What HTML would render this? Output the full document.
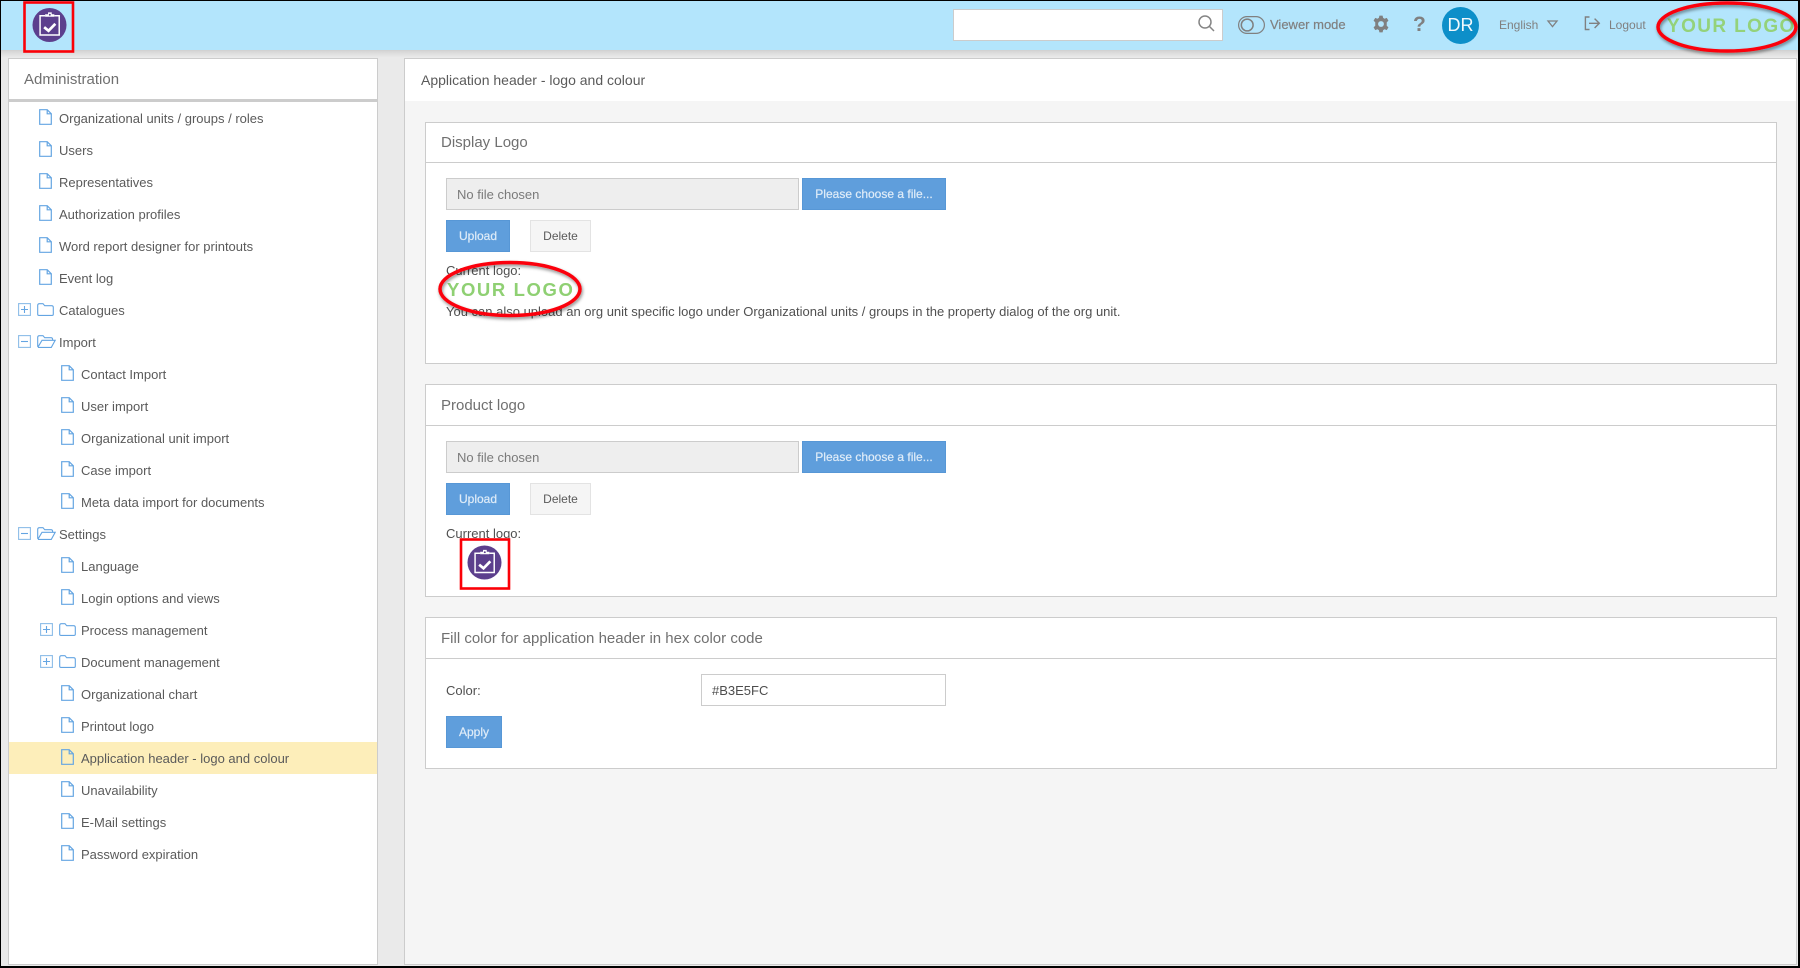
<!DOCTYPE html>
<html><head><meta charset="utf-8"><title>Application header - logo and colour</title>
<style>
html,body{margin:0;padding:0}
body{width:1800px;height:968px;overflow:hidden;position:relative;background:#eaeaea;font-family:"Liberation Sans",Arial,sans-serif;font-size:13px;color:#555}
div,span{position:absolute;box-sizing:border-box;white-space:nowrap}
.hdr{left:0;top:0;width:1800px;height:50px;background:#b3e5fc}
.shadow{left:0;top:50px;width:1800px;height:8px;background:linear-gradient(#cfcfcf,#d9d9d9 25%,#ececec)}
.side{left:8px;top:58px;width:370px;height:907px;background:#fff;border:1px solid #ccc}
.sidetitle{left:24px;top:58px;height:41px;line-height:44px;font-size:15px;color:#707070}
.sideline{left:9px;top:99px;width:368px;height:3px;background:#ccc}
.r{height:32px;line-height:34px;color:#5a5a5a}
.hl{left:9px;top:742px;width:368px;height:32px;background:#fdeeba}
.main{left:404px;top:58px;width:1393px;height:907px;background:#f5f5f5;border:1px solid #ccc}
.maintop{left:405px;top:59px;width:1391px;height:42px;background:#fff}
.maintitle{left:421px;top:59px;line-height:42px;font-size:14px;color:#5a5a5a}
.card{left:425px;width:1352px;background:#fff;border:1px solid #ccc}
.line{left:426px;width:1350px;height:1px;background:#ccc}
.ct{left:441px;font-size:15px;color:#707070;line-height:20px}
.inp{left:446px;width:353px;height:32px;background:#eee;border:1px solid #ccc;line-height:31px;padding-left:10px;color:#7a7a7a;font-size:13px}
.btn{background:#5f9edc;border:1px solid #5797d6;color:#dfecf8;font-size:12px;font-weight:400;text-align:center;line-height:30px;-webkit-text-stroke:.2px #dfecf8}
.del{left:530px;width:61px;height:32px;background:#f5f5f5;border:1px solid #e3e3e3;color:#5a5a5a;font-size:12px;text-align:center;line-height:30px}
.t{color:#505050;line-height:18px}
.logo{font-weight:bold;color:#8fd073;letter-spacing:1.6px}
.gr{color:#808080}
svg{position:absolute;overflow:visible}
</style></head><body>
<svg width="0" height="0" style="position:absolute"><defs>
<symbol id="doc" viewBox="0 0 13 16" overflow="visible"><path d="M.7.7H8.2L12.3 4.8V15.3H.7Z M8.2.7V4.8H12.3" fill="none" stroke="#64a5e2" stroke-width="1.2"/></symbol>
<symbol id="fc" viewBox="0 0 17 13" overflow="visible"><path d="M.7 11.2V2.4Q.7.7 2.4.7H6L7.7 2.7H14.6Q16.3 2.7 16.3 4.4V11.2Q16.3 12.4 15 12.4H2Q.7 12.4.7 11.2Z" fill="none" stroke="#64a5e2" stroke-width="1.1"/></symbol>
<symbol id="fo" viewBox="0 0 19 13" overflow="visible"><path d="M.7 11.8V2.4Q.7.7 2.4.7H6L7.7 2.7H14Q15.6 2.7 15.6 4.4V5.3H5L.9 12.2 M.9 12.4H14.3L18.2 5.3H15.6" fill="none" stroke="#64a5e2" stroke-width="1.1"/></symbol>
<symbol id="plus" viewBox="0 0 13 13" overflow="visible"><rect x=".6" y=".6" width="11.8" height="11.8" fill="none" stroke="#8dbde8" stroke-width="1.1"/><path d="M3 6.5H10M6.5 3V10" stroke="#64a5e2" stroke-width="1.1"/></symbol>
<symbol id="minus" viewBox="0 0 13 13" overflow="visible"><rect x=".6" y=".6" width="11.8" height="11.8" fill="none" stroke="#8dbde8" stroke-width="1.1"/><path d="M3 6.5H10" stroke="#64a5e2" stroke-width="1.1"/></symbol>
<symbol id="clip" viewBox="0 0 36 36" overflow="visible"><circle cx="18" cy="18" r="17.5" fill="#5c3f8d"/><path d="M13.5 8.5H8.3V28.3H28V8.5H23" fill="none" stroke="#fff" stroke-width="1.5"/><path d="M13.5 9.5H23V7H20.3V5H16.5V7H13.5Z" fill="#fff"/><circle cx="18.3" cy="7.4" r="1" fill="#5c3f8d"/><path d="M12.5 20.3L17 24L24 16.8" fill="none" stroke="#fff" stroke-width="2.8"/></symbol>
</defs></svg>

<div class="hdr"></div><div class="shadow"></div>

<div class="side"></div>
<div class="sidetitle">Administration</div>
<div class="sideline"></div>
<div class="hl"></div>

<svg style="left:39px;top:109px" width="13" height="16"><use href="#doc"/></svg><div class="r" style="left:59px;top:102px">Organizational units / groups / roles</div>
<svg style="left:39px;top:141px" width="13" height="16"><use href="#doc"/></svg><div class="r" style="left:59px;top:134px">Users</div>
<svg style="left:39px;top:173px" width="13" height="16"><use href="#doc"/></svg><div class="r" style="left:59px;top:166px">Representatives</div>
<svg style="left:39px;top:205px" width="13" height="16"><use href="#doc"/></svg><div class="r" style="left:59px;top:198px">Authorization profiles</div>
<svg style="left:39px;top:237px" width="13" height="16"><use href="#doc"/></svg><div class="r" style="left:59px;top:230px">Word report designer for printouts</div>
<svg style="left:39px;top:269px" width="13" height="16"><use href="#doc"/></svg><div class="r" style="left:59px;top:262px">Event log</div>
<svg style="left:18px;top:303px" width="13" height="13"><use href="#plus"/></svg><svg style="left:37px;top:303px" width="17" height="13"><use href="#fc"/></svg><div class="r" style="left:59px;top:294px">Catalogues</div>
<svg style="left:18px;top:335px" width="13" height="13"><use href="#minus"/></svg><svg style="left:37px;top:335px" width="19" height="13"><use href="#fo"/></svg><div class="r" style="left:59px;top:326px">Import</div>
<svg style="left:61px;top:365px" width="13" height="16"><use href="#doc"/></svg><div class="r" style="left:81px;top:358px">Contact Import</div>
<svg style="left:61px;top:397px" width="13" height="16"><use href="#doc"/></svg><div class="r" style="left:81px;top:390px">User import</div>
<svg style="left:61px;top:429px" width="13" height="16"><use href="#doc"/></svg><div class="r" style="left:81px;top:422px">Organizational unit import</div>
<svg style="left:61px;top:461px" width="13" height="16"><use href="#doc"/></svg><div class="r" style="left:81px;top:454px">Case import</div>
<svg style="left:61px;top:493px" width="13" height="16"><use href="#doc"/></svg><div class="r" style="left:81px;top:486px">Meta data import for documents</div>
<svg style="left:18px;top:527px" width="13" height="13"><use href="#minus"/></svg><svg style="left:37px;top:527px" width="19" height="13"><use href="#fo"/></svg><div class="r" style="left:59px;top:518px">Settings</div>
<svg style="left:61px;top:557px" width="13" height="16"><use href="#doc"/></svg><div class="r" style="left:81px;top:550px">Language</div>
<svg style="left:61px;top:589px" width="13" height="16"><use href="#doc"/></svg><div class="r" style="left:81px;top:582px">Login options and views</div>
<svg style="left:40px;top:623px" width="13" height="13"><use href="#plus"/></svg><svg style="left:59px;top:623px" width="17" height="13"><use href="#fc"/></svg><div class="r" style="left:81px;top:614px">Process management</div>
<svg style="left:40px;top:655px" width="13" height="13"><use href="#plus"/></svg><svg style="left:59px;top:655px" width="17" height="13"><use href="#fc"/></svg><div class="r" style="left:81px;top:646px">Document management</div>
<svg style="left:61px;top:685px" width="13" height="16"><use href="#doc"/></svg><div class="r" style="left:81px;top:678px">Organizational chart</div>
<svg style="left:61px;top:717px" width="13" height="16"><use href="#doc"/></svg><div class="r" style="left:81px;top:710px">Printout logo</div>
<svg style="left:61px;top:749px" width="13" height="16"><use href="#doc"/></svg><div class="r" style="left:81px;top:742px">Application header - logo and colour</div>
<svg style="left:61px;top:781px" width="13" height="16"><use href="#doc"/></svg><div class="r" style="left:81px;top:774px">Unavailability</div>
<svg style="left:61px;top:813px" width="13" height="16"><use href="#doc"/></svg><div class="r" style="left:81px;top:806px">E-Mail settings</div>
<svg style="left:61px;top:845px" width="13" height="16"><use href="#doc"/></svg><div class="r" style="left:81px;top:838px">Password expiration</div>

<div class="main"></div><div class="maintop"></div>
<div class="maintitle">Application header - logo and colour</div>

<div class="card" style="top:122px;height:242px"></div><div class="line" style="top:162px"></div>
<div class="ct" style="top:133px">Display Logo</div>
<div class="inp" style="top:178px">No file chosen</div>
<div class="btn" style="left:802px;top:178px;width:144px;height:32px">Please choose a file...</div>
<div class="btn" style="left:446px;top:220px;width:64px;height:32px">Upload</div>
<div class="del" style="top:220px">Delete</div>
<div class="t" style="left:446px;top:262px">Current logo:</div>
<div class="logo" style="left:447px;top:276px;font-size:18.5px;line-height:28px">YOUR LOGO</div>
<div class="t" style="left:446px;top:303px">You can also upload an org unit specific logo under Organizational units / groups in the property dialog of the org unit.</div>

<div class="card" style="top:384px;height:213px"></div><div class="line" style="top:425px"></div>
<div class="ct" style="top:396px">Product logo</div>
<div class="inp" style="top:441px">No file chosen</div>
<div class="btn" style="left:802px;top:441px;width:144px;height:32px">Please choose a file...</div>
<div class="btn" style="left:446px;top:483px;width:64px;height:32px">Upload</div>
<div class="del" style="top:483px">Delete</div>
<div class="t" style="left:446px;top:525px">Current logo:</div>
<svg style="left:467px;top:545px" width="35" height="35" viewBox="0 0 36 36"><use href="#clip" width="36" height="36"/></svg>

<div class="card" style="top:617px;height:152px"></div><div class="line" style="top:658px"></div>
<div class="ct" style="top:629px">Fill color for application header in hex color code</div>
<div class="t" style="left:446px;top:682px">Color:</div>
<div style="left:701px;top:674px;width:245px;height:32px;background:#fff;border:1px solid #ccc;line-height:31px;padding-left:10px;color:#4d4d4d">#B3E5FC</div>
<div class="btn" style="left:446px;top:716px;width:56px;height:32px">Apply</div>

<!-- header content -->
<svg style="left:32px;top:7px" width="35" height="36" viewBox="0 0 36 36"><use href="#clip" width="36" height="36"/></svg>
<div style="left:953px;top:9px;width:270px;height:32px;background:#fff;border:1px solid #ccc"></div>
<svg style="left:1197px;top:14px" width="20" height="20" fill="none" stroke="#858585" stroke-width="1.5"><circle cx="8" cy="8" r="6"/><path d="M12.4 12.4L17 17"/></svg>
<svg style="left:1238px;top:16px" width="27" height="18" fill="none" stroke="#808080" stroke-width="1.2"><rect x=".6" y=".6" width="25.8" height="16.8" rx="8.4"/><circle cx="9.2" cy="9" r="5.9" stroke-width="1.5"/></svg>
<div class="gr" style="left:1270px;top:16px;line-height:18px;font-size:13px;-webkit-text-stroke:.2px #808080">Viewer mode</div>
<svg style="left:1372px;top:15px" width="18" height="18" viewBox="0 0 16 16"><path fill="#808080" fill-rule="evenodd" d="M6.6.6H9.4L9.9 2.6 11.2 3.3 13.1 2.6 14.6 5 13.1 6.5V8 9.5L14.6 11 13.1 13.4 11.2 12.7 9.9 13.4 9.4 15.4H6.6L6.1 13.4 4.8 12.7 2.9 13.4 1.4 11 2.9 9.5V6.5L1.4 5 2.9 2.6 4.8 3.3 6.1 2.6ZM8 5.4A2.6 2.6 0 1 0 8 10.6 2.6 2.6 0 1 0 8 5.4Z"/></svg>
<div style="left:1413px;top:13px;line-height:24px;font-size:21px;font-weight:bold;color:#808080">?</div>
<div style="left:1442px;top:7px;width:37px;height:37px;border-radius:50%;background:#0d8fc9;color:#f2f9fd;font-size:18px;text-align:center;line-height:37px">DR</div>
<div class="gr" style="left:1499px;top:16px;line-height:18px;font-size:12px">English</div>
<svg style="left:1547px;top:20px" width="11" height="8" fill="none" stroke="#808080" stroke-width="1.3"><path d="M1 1H10L5.5 6.6Z"/></svg>
<svg style="left:1584px;top:16px" width="17" height="15" fill="none" stroke="#808080" stroke-width="1.4"><path d="M5.5 1H1.4V13.5H5.5M5 7.3H15M10.6 2.6L15.3 7.3 10.6 12"/></svg>
<div class="gr" style="left:1609px;top:16px;line-height:18px;font-size:12px">Logout</div>
<div class="logo" style="left:1667px;top:12px;font-size:19px;line-height:30px;letter-spacing:1.4px;color:#94d27a">YOUR LOGO</div>

<!-- annotations -->
<svg style="left:0;top:0;pointer-events:none" width="1800" height="968" fill="none" stroke="#fb0007">
<defs><filter id="sh" x="-10%" y="-20%" width="120%" height="150%"><feDropShadow dx="1" dy="2" stdDeviation="1.5" flood-color="#000" flood-opacity=".45"/></filter></defs>
<rect x="24.5" y="2.5" width="48.5" height="49" stroke-width="2.6"/>
<rect x="461" y="539.5" width="48" height="49" stroke-width="2.6"/>
<ellipse cx="1727" cy="27" rx="69" ry="24" stroke-width="3.5" filter="url(#sh)"/>
<ellipse cx="510" cy="289" rx="70" ry="26.5" stroke-width="3.5" filter="url(#sh)"/>
</svg>
<!-- screenshot frame -->
<div style="left:0;top:0;width:1800px;height:968px;border:1px solid #000;border-right-width:2px;border-bottom-width:2px;border-top-width:1px"></div>
</body></html>
